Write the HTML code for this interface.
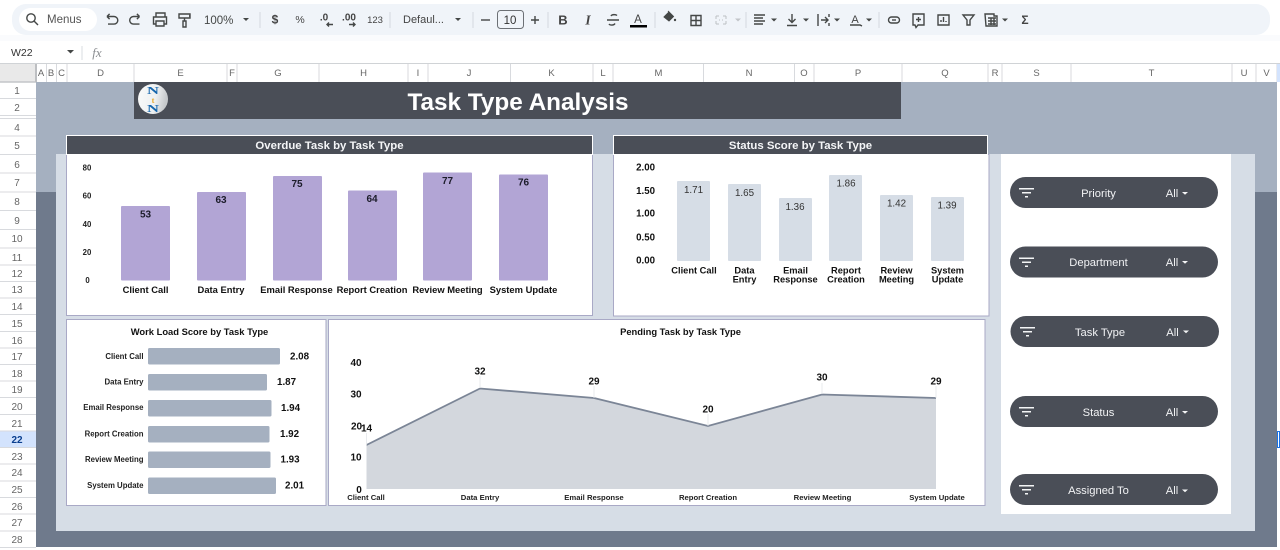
<!DOCTYPE html>
<html lang="en"><head><meta charset="utf-8"><title>Task Type Analysis</title>
<style>
html,body{margin:0;padding:0;background:#fff;width:1280px;height:550px;overflow:hidden}
svg{display:block;font-family:"Liberation Sans",sans-serif}
.ch text{font-size:9.5px;fill:#666;text-anchor:middle}
.rh text{font-size:10px;fill:#666;text-anchor:middle}
.ic{fill:none;stroke:#444746;stroke-width:1.4}
.f{fill:#444746}
.t{fill:#444746;font-size:11px}
.y1 text{font-size:7.8px;font-weight:bold;fill:#222;text-anchor:middle}
.c1 text{font-size:9.4px;font-weight:bold;fill:#111;text-anchor:middle}
.v1 text{font-size:10px;font-weight:bold;fill:#1c1c2a;text-anchor:middle}
.v2 text{font-size:9.8px;fill:#333;text-anchor:middle}
.y2 text{font-size:9.7px;font-weight:bold;fill:#111;text-anchor:end}
.c2 text{font-size:9.3px;font-weight:bold;fill:#111;text-anchor:middle}
.c3 text{font-size:7.8px;font-weight:bold;fill:#222;text-anchor:end}
.v3 text{font-size:9.8px;font-weight:bold;fill:#111}
.y4 text{font-size:10px;font-weight:bold;fill:#111;text-anchor:middle}
.v4 text{font-size:10px;font-weight:bold;fill:#111;text-anchor:middle}
.c4 text{font-size:7.7px;font-weight:bold;fill:#222;text-anchor:middle}
.pl text{font-size:11.2px;fill:#f2f3f5;text-anchor:middle}
.hd{font-size:11.4px;font-weight:bold;fill:#f4f5f7;text-anchor:middle}
.ct{font-size:9.4px;font-weight:bold;fill:#111;text-anchor:middle}
</style></head><body>
<svg width="1280" height="550" viewBox="0 0 1280 550" xmlns="http://www.w3.org/2000/svg">
<defs><linearGradient id="lg" x1="0" y1="0" x2="1" y2="0.2"><stop offset="0" stop-color="#fafbfb"/><stop offset="0.65" stop-color="#eef0f1"/><stop offset="1" stop-color="#c6c9cc"/></linearGradient></defs>
<rect width="1280" height="550" fill="#fff"/>
<!-- toolbar -->
<rect x="0" y="35" width="1280" height="6" fill="#fafbfd"/>
<rect x="12" y="4" width="1258" height="31" rx="14" fill="#f0f4f9"/>
<rect x="19" y="8" width="78" height="23" rx="11.5" fill="#fff"/>
<circle cx="31" cy="18" r="4.2" class="ic"/><path d="M34 21l4 4" class="ic"/>
<text x="47" y="23" font-size="11.500" fill="#555">Menus</text>
<path d="M107 16.500h7a3.800 3.800 0 0 1 0 7.600h-6M107 16.500l2.600-2.600M107 16.500l2.600 2.600" class="ic"/>
<path d="M139.500 16.500h-6a3.800 3.800 0 0 0 0 7.600h6M139.500 16.500l-2.600-2.600M139.500 16.500l-2.600 2.600" class="ic"/>
<path d="M156 17v-4h9v4M156 24h-2.500v-7h13v7H164M156 21h8v5h-8z" class="ic"/>
<path d="M179 14h11v4h-11zM190 16h-1M184.500 18v3M183 21h3v6h-3z" class="ic"/>
<text x="204" y="24" class="t" style="font-size:11.500px">100%</text>
<path d="M243 18h6l-3 3z" class="f"/>
<path d="M260 12v16M390 12v16M473 12v16M548 12v16M655 12v16M746 12v16M879 12v16" stroke="#d5d9de" stroke-width="1"/>
<text x="275" y="23.500" text-anchor="middle" font-size="12" fill="#444" font-weight="bold">$</text>
<text x="300" y="23" text-anchor="middle" font-size="10.500" fill="#444">%</text>
<text x="324" y="20.500" text-anchor="middle" font-size="10" fill="#444" font-weight="bold">.0</text>
<path d="M333 24.500h-6M329 22.500l-2 2 2 2" class="ic" stroke-width="1.100"/>
<text x="349" y="20.500" text-anchor="middle" font-size="10" fill="#444" font-weight="bold">.00</text>
<path d="M349 24.500h6M353 22.500l2 2-2 2" class="ic" stroke-width="1.100"/>
<text x="375" y="23" text-anchor="middle" font-size="9.500" fill="#444">123</text>
<text x="403" y="23" font-size="11" fill="#444">Defaul...</text>
<path d="M455 18h6l-3 3z" class="f"/>
<path d="M481 20h9" class="ic"/>
<rect x="497.500" y="10.500" width="26" height="18" rx="3" fill="none" stroke="#6c7075"/>
<text x="510" y="24" text-anchor="middle" font-size="11.500" fill="#333">10</text>
<path d="M531 20h8M535 16v8" class="ic"/>
<text x="563" y="24.500" text-anchor="middle" font-size="13" font-weight="bold" fill="#444">B</text>
<text x="588" y="24.500" text-anchor="middle" font-size="13.500" font-weight="bold" font-style="italic" fill="#444" font-family="Liberation Serif">I</text>
<path d="M607 20h12M617 15.500c-1-1-5-1.500-6 .5M609 24c1 1.500 5 1.500 6-.5" class="ic" stroke-width="1.200"/>
<text x="638" y="23" text-anchor="middle" font-size="11.500" fill="#444">A</text>
<rect x="630" y="25" width="17" height="2.500" fill="#000"/>
<path d="M664 17l5-5 4.500 4.500-4.500 4.500zM668 11l1 1" fill="#444746" stroke="#444746"/><circle cx="675" cy="20" r="1.200" class="f"/>
<path d="M691 15.500h10v10h-10zM696 15.500v10M691 20.500h10" class="ic" stroke-width="1.200"/>
<path d="M716 16h3M723 16h3M716 24h3M723 24h3M716 16v3M726 16v3M716 21v3M726 21v3M720 20h-1M722 20h1" stroke="#bcc0c4" fill="none"/>
<path d="M735 18.500h6l-3 3z" fill="#c2c5c9"/>
<path d="M754 15h11M754 18h9M754 21h11M754 24h9" class="ic" stroke-width="1"/><path d="M771 18.500h6l-3 3z" class="f"/>
<path d="M792 14v8M788.500 19l3.500 3.500 3.500-3.500M787 25.500h10" class="ic" stroke-width="1.200"/><path d="M803 18.500h6l-3 3z" class="f"/>
<path d="M818 14v12M821 20h7M825 17l3 3-3 3M829 14v3M829 23v3" class="ic" stroke-width="1.200"/><path d="M834 18.500h6l-3 3z" class="f"/>
<text x="855" y="23" text-anchor="middle" font-size="11" fill="#444">A</text><path d="M850 25h10l2 1" class="ic" stroke-width="1"/><path d="M866 18.500h6l-3 3z" class="f"/>
<rect x="888.500" y="17" width="11" height="6" rx="3" class="ic" stroke-width="1.200"/><path d="M892 20h4" class="ic"/>
<path d="M913 14h11v11h-6l-2 2.500-1-2.500h-2zM918.500 17v5M916 19.500h5" class="ic" stroke-width="1.200"/>
<path d="M938 15h11v10h-11zM941 22v-2M943.500 22v-5M946 22v-1" class="ic" stroke-width="1.200"/>
<path d="M963 15h11l-4 5v5h-3v-5z" class="ic" stroke-width="1.200"/>
<path d="M985 14h9v2h3v10h-11zM988 18h8M988 21h8M988 24h8M991 18v7M994 18v7" class="ic" stroke-width="1"/><path d="M1002 18.500h6l-3 3z" class="f"/>
<text x="1025" y="24" text-anchor="middle" font-size="12" fill="#444" font-weight="bold">Σ</text>
<!-- formula bar -->
<text x="11" y="56" font-size="10.500" fill="#333">W22</text>
<path d="M67 50h7l-3.500 3.500z" class="f"/>
<path d="M82 46v14" stroke="#dadce0"/>
<text x="97" y="57" text-anchor="middle" font-size="13" font-style="italic" fill="#8a8d91" font-family="Liberation Serif">fx</text>
<!-- column header -->
<rect x="0" y="63" width="1280" height="19" fill="#fff"/>
<rect x="0" y="64" width="36" height="18" fill="#e9e9e9"/>
<path d="M0 63.500H1280" stroke="#d0d3d6"/>
<path d="M0 82H36" stroke="#c4c6c9" stroke-width="1.500"/>
<path d="M36 64v18" stroke="#bdbfc2" stroke-width="2"/>
<path d="M46.500 64v18M56.500 64v18M67 64v18M134 64v18M227 64v18M237 64v18M319 64v18M408 64v18M428 64v18M510.500 64v18M593 64v18M613 64v18M703.500 64v18M794.500 64v18M814 64v18M902 64v18M988 64v18M1002 64v18M1071 64v18M1232 64v18M1256 64v18M1277 64v18" stroke="#d8dade"/>
<rect x="1277" y="64" width="3" height="18" fill="#d3e3fd"/>
<g class="ch">
<text x="41" y="76">A</text><text x="51" y="76">B</text><text x="61.500" y="76">C</text><text x="100.500" y="76">D</text><text x="180.500" y="76">E</text><text x="232" y="76">F</text><text x="278" y="76">G</text><text x="363.500" y="76">H</text><text x="418" y="76">I</text><text x="469" y="76">J</text><text x="551.500" y="76">K</text><text x="603" y="76">L</text><text x="658.500" y="76">M</text><text x="749" y="76">N</text><text x="804" y="76">O</text><text x="858" y="76">P</text><text x="945" y="76">Q</text><text x="995" y="76">R</text><text x="1036.500" y="76">S</text><text x="1151.500" y="76">T</text><text x="1244" y="76">U</text><text x="1266.500" y="76">V</text>
</g>
<!-- row header -->
<rect x="0" y="431" width="36" height="16.500" fill="#d3e3fd"/>
<path d="M0 98.500H36M0 115.500H36M0 118.500H36M0 136H36M0 154.500H36M0 173H36M0 192H36M0 210.500H36M0 229.500H36M0 248H36M0 265H36M0 281.500H36M0 298H36M0 314.500H36M0 331.500H36M0 348H36M0 364.500H36M0 381H36M0 397.500H36M0 414.500H36M0 431H36M0 447.500H36M0 464H36M0 481H36M0 497.500H36M0 514H36M0 531H36M0 547.500H36" stroke="#d8dade"/>
<g class="rh">
<text x="17" y="94">1</text><text x="17" y="111">2</text><text x="17" y="131">4</text><text x="17" y="149">5</text><text x="17" y="168">6</text><text x="17" y="186">7</text><text x="17" y="205">8</text><text x="17" y="224">9</text><text x="17" y="242">10</text><text x="17" y="261">11</text><text x="17" y="277">12</text><text x="17" y="293">13</text><text x="17" y="310">14</text><text x="17" y="327">15</text><text x="17" y="344">16</text><text x="17" y="360">17</text><text x="17" y="377">18</text><text x="17" y="393">19</text><text x="17" y="410">20</text><text x="17" y="427">21</text><text x="17" y="443" style="fill:#0b3f8f;font-weight:bold">22</text><text x="17" y="460">23</text><text x="17" y="476">24</text><text x="17" y="493">25</text><text x="17" y="510">26</text><text x="17" y="526">27</text><text x="17" y="543">28</text>
</g>
<!-- sheet -->
<rect x="36" y="82" width="1241" height="110" fill="#a5b0c0"/>
<rect x="36" y="192" width="1241" height="355" fill="#6f7a8c"/>
<rect x="56" y="154" width="1199" height="377" fill="#d6dde6"/>
<rect x="1001" y="154" width="230" height="360" fill="#fff"/>
<rect x="1277.500" y="431.500" width="2" height="16" fill="none" stroke="#1a73e8"/>
<!-- title -->
<rect x="134" y="82" width="767" height="37" fill="#4a4e57"/>
<circle cx="153" cy="99" r="15" fill="url(#lg)"/>
<text x="153" y="94" text-anchor="middle" font-size="10" font-weight="bold" fill="#1566ad" font-family="Liberation Serif" textLength="12" lengthAdjust="spacingAndGlyphs">N</text>
<text x="153" y="103" text-anchor="middle" font-size="8.500" font-weight="bold" fill="#e8a92e" font-family="Liberation Serif">t</text>
<text x="153" y="112" text-anchor="middle" font-size="10" font-weight="bold" fill="#1566ad" font-family="Liberation Serif" textLength="12" lengthAdjust="spacingAndGlyphs">N</text>
<text x="518" y="110" text-anchor="middle" font-size="24.300" font-weight="bold" fill="#fff">Task Type Analysis</text>
<!-- chart 1 -->
<rect x="66.500" y="154.500" width="526" height="161" fill="#fff" stroke="#a9a9c6"/>
<rect x="66.500" y="135.500" width="526" height="19" fill="#4a4e57" stroke="#fff"/>
<text x="329.500" y="149" class="hd">Overdue Task by Task Type</text>
<g class="y1"><text x="87" y="170.500">80</text><text x="87" y="198.500">60</text><text x="87" y="227">40</text><text x="87" y="255">20</text><text x="87.500" y="283">0</text></g>
<g fill="#b2a5d5">
<rect x="121" y="206" width="49" height="74.500" rx="1"/><rect x="197" y="192" width="49" height="88.500" rx="1"/><rect x="273" y="176" width="49" height="104.500" rx="1"/><rect x="348" y="190.500" width="49" height="90" rx="1"/><rect x="423" y="172.500" width="49" height="108" rx="1"/><rect x="499" y="174.500" width="49" height="106" rx="1"/>
</g>
<g class="v1"><text x="145.500" y="217.500">53</text><text x="221" y="203">63</text><text x="297" y="187">75</text><text x="372" y="202">64</text><text x="447.500" y="184">77</text><text x="523.500" y="185.500">76</text></g>
<g class="c1"><text x="145.500" y="293">Client Call</text><text x="221" y="293">Data Entry</text><text x="296.500" y="293">Email Response</text><text x="372" y="293">Report Creation</text><text x="447.500" y="293">Review Meeting</text><text x="523.500" y="293">System Update</text></g>
<!-- chart 2 -->
<rect x="613.500" y="154.500" width="375.500" height="161.500" fill="#fff" stroke="#a9a9c6"/>
<rect x="613.500" y="135.500" width="374" height="19" fill="#4a4e57" stroke="#fff"/>
<text x="800.500" y="149" class="hd">Status Score by Task Type</text>
<g class="y2"><text x="655" y="170.500">2.00</text><text x="655" y="194">1.50</text><text x="655" y="216.500">1.00</text><text x="655" y="240.500">0.50</text><text x="655" y="263.500">0.00</text></g>
<g fill="#d6dde6">
<rect x="677" y="181" width="33" height="80" rx="1"/><rect x="728" y="184" width="33" height="77" rx="1"/><rect x="779" y="198" width="33" height="63" rx="1"/><rect x="829" y="175" width="33" height="86" rx="1"/><rect x="880" y="195" width="33" height="66" rx="1"/><rect x="931" y="197" width="33" height="64" rx="1"/>
</g>
<g class="v2"><text x="693.500" y="193">1.71</text><text x="744.500" y="196">1.65</text><text x="795" y="210">1.36</text><text x="846" y="186.500">1.86</text><text x="896.500" y="206.500">1.42</text><text x="947" y="208.500">1.39</text></g>
<g class="c2"><text x="694" y="273.500">Client Call</text><text x="744.500" y="273.500">Data</text><text x="744.500" y="282.500">Entry</text><text x="795.500" y="273.500">Email</text><text x="795.500" y="282.500">Response</text><text x="846" y="273.500">Report</text><text x="846" y="282.500">Creation</text><text x="896.500" y="273.500">Review</text><text x="896.500" y="282.500">Meeting</text><text x="947.500" y="273.500">System</text><text x="947.500" y="282.500">Update</text></g>
<!-- chart 3 -->
<rect x="66.500" y="319.500" width="259.500" height="186" fill="#fff" stroke="#a9a9c6"/>
<text x="199.500" y="335" class="ct">Work Load Score by Task Type</text>
<g class="c3"><text x="143.500" y="359">Client Call</text><text x="143.500" y="384.500">Data Entry</text><text x="143.500" y="410">Email Response</text><text x="143.500" y="436.500">Report Creation</text><text x="143.500" y="462">Review Meeting</text><text x="143.500" y="488">System Update</text></g>
<g fill="#a5b0c0">
<rect x="148" y="348" width="132" height="16.500" rx="1.500"/><rect x="148" y="374" width="119" height="16.500" rx="1.500"/><rect x="148" y="400" width="123.500" height="16.500" rx="1.500"/><rect x="148" y="426" width="121.500" height="16.500" rx="1.500"/><rect x="148" y="451.500" width="122.500" height="16.500" rx="1.500"/><rect x="148" y="477.500" width="128" height="16.500" rx="1.500"/>
</g>
<g class="v3"><text x="290" y="359.500">2.08</text><text x="277" y="385">1.87</text><text x="281" y="411">1.94</text><text x="280" y="437">1.92</text><text x="280.500" y="462.500">1.93</text><text x="285" y="488.500">2.01</text></g>
<!-- chart 4 -->
<rect x="328.500" y="319.500" width="656.500" height="186" fill="#fff" stroke="#a9a9c6"/>
<text x="680.500" y="335" class="ct">Pending Task by Task Type</text>
<g class="y4"><text x="356" y="366">40</text><text x="356" y="397.500">30</text><text x="356.500" y="429.500">20</text><text x="356" y="460.500">10</text><text x="359" y="493">0</text></g>
<path d="M366.500 445L480 388.500L594 398L708 426L822 394.500L936 398V489H366.500Z" fill="#d3d7dd"/>
<path d="M366.500 445L480 388.500L594 398L708 426L822 394.500L936 398" fill="none" stroke="#7b8596" stroke-width="1.800"/>
<path d="M366.500 433V445M480 376V388M594 386V398M708 414V426M822 383V394M936 386V398" stroke="#e4e6ea" stroke-width=".8"/>
<g class="v4"><text x="366.500" y="431.500">14</text><text x="480" y="374.500">32</text><text x="594" y="384.500">29</text><text x="708" y="412.500">20</text><text x="822" y="380.500">30</text><text x="936" y="384.500">29</text></g>
<g class="c4"><text x="366" y="500">Client Call</text><text x="480" y="500">Data Entry</text><text x="594" y="500">Email Response</text><text x="708" y="500">Report Creation</text><text x="822.500" y="500">Review Meeting</text><text x="937" y="500">System Update</text></g>
<!-- filters -->
<g fill="#4a4e57">
<rect x="1010" y="177" width="208" height="31" rx="15.500"/><rect x="1010" y="246.500" width="208" height="31" rx="15.500"/><rect x="1010.500" y="316" width="208.500" height="31" rx="15.500"/><rect x="1010" y="396" width="208" height="31" rx="15.500"/><rect x="1010" y="474" width="208" height="31" rx="15.500"/>
</g>
<g fill="#f4f5f6">
<path d="M1019 188h15v1.500h-15zM1022 192h9v1.500h-9zM1025 196h3v1.500h-3z"/>
<path d="M1019 257.500h15v1.500h-15zM1022 261.500h9v1.500h-9zM1025 265.500h3v1.500h-3z"/>
<path d="M1020 327h15v1.500h-15zM1023 331h9v1.500h-9zM1026 335h3v1.500h-3z"/>
<path d="M1019 407h15v1.500h-15zM1022 411h9v1.500h-9zM1025 415h3v1.500h-3z"/>
<path d="M1019 485h15v1.500h-15zM1022 489h9v1.500h-9zM1025 493h3v1.500h-3z"/>
<path d="M1182 192h6l-3 2.800zM1182 261h6l-3 2.800zM1183 330.500h6l-3 2.800zM1182 411h6l-3 2.800zM1182 489.500h6l-3 2.800z"/>
</g>
<g class="pl">
<text x="1098.500" y="197">Priority</text><text x="1172" y="197">All</text>
<text x="1098.500" y="266">Department</text><text x="1172" y="266">All</text>
<text x="1100" y="336">Task Type</text><text x="1172.500" y="336">All</text>
<text x="1098.500" y="416">Status</text><text x="1172" y="416">All</text>
<text x="1098.500" y="494">Assigned To</text><text x="1172" y="494">All</text>
</g>
</svg>
</body></html>
